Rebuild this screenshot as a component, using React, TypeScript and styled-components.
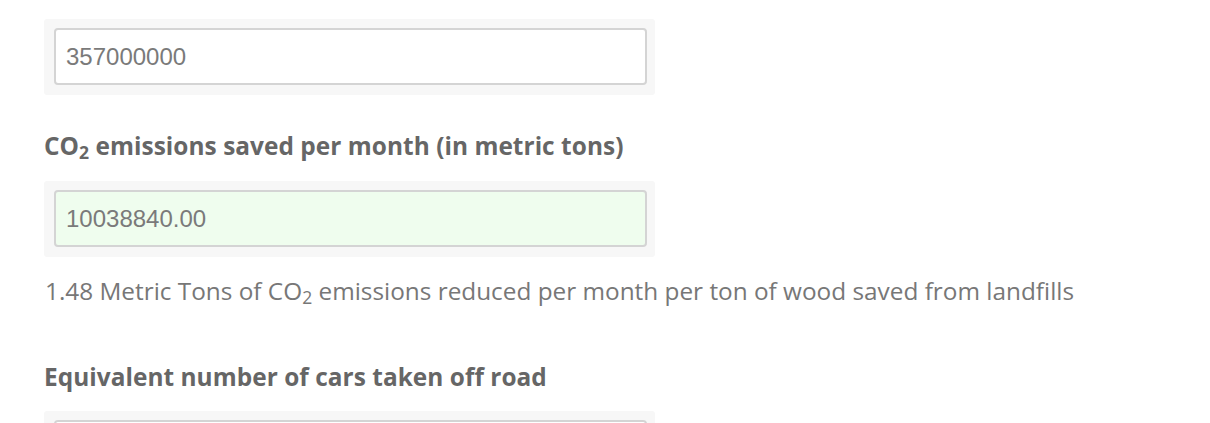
import styled, { createGlobalStyle } from 'styled-components';

const GlobalStyle = createGlobalStyle`
  body {
    margin: 0;
    background: #ffffff;
    font-family: 'Open Sans', 'Liberation Sans', sans-serif;
    color: #777777;
  }
`;

const Page = styled.div`
  padding: 19px 0 0 44px;
  width: 1166px;
  height: 404px;
  overflow: hidden;
`;

const FieldWell = styled.div`
  width: 611px;
  box-sizing: border-box;
  padding: 9px 8px 10px 10px;
  background-color: #f7f7f7;
  border-radius: 3px;
`;

const NumberInput = styled.input<{ $ok?: boolean }>`
  display: block;
  width: 100%;
  height: 57px;
  box-sizing: border-box;
  padding: 0 10px;
  border: 2px solid #d4d4d4;
  border-radius: 4px;
  background-color: ${(p) => (p.$ok ? '#effdee' : '#ffffff')};
  font-family: 'Liberation Sans', Arial, sans-serif;
  font-size: 24px;
  color: #7a7a7a;
  outline: none;
`;

const Label = styled.h3<{ $top?: number }>`
  margin: ${(p) => p.$top ?? 36}px 0 ${(p) => (p.$top ? 19 : 20)}px 0;
  font-size: 24.4px;
  font-weight: 700;
  line-height: 30px;
  letter-spacing: 0.05px;
  color: #666666;
  sub {
    font-size: 0.72em;
    vertical-align: -0.25em;
    line-height: 0;
  }
`;

const Note = styled.p`
  margin: 19px 0 0 1px;
  font-size: 24.35px;
  line-height: 30px;
  color: #777777;
  sub {
    font-size: 0.72em;
    vertical-align: -0.25em;
    line-height: 0;
  }
`;

const App = () => {
  return (
    <Page>
      <GlobalStyle />
      <FieldWell>
        <NumberInput defaultValue="357000000" readOnly />
      </FieldWell>
      <Label>
        CO<sub>2</sub> emissions saved per month (in metric tons)
      </Label>
      <FieldWell>
        <NumberInput $ok defaultValue="10038840.00" readOnly />
      </FieldWell>
      <Note>
        1.48 Metric Tons of CO<sub>2</sub> emissions reduced per month per ton of wood saved from landfills
      </Note>
      <Label $top={56}>Equivalent number of cars taken off road</Label>
      <FieldWell>
        <NumberInput defaultValue="" readOnly />
      </FieldWell>
    </Page>
  );
};

export default App;
